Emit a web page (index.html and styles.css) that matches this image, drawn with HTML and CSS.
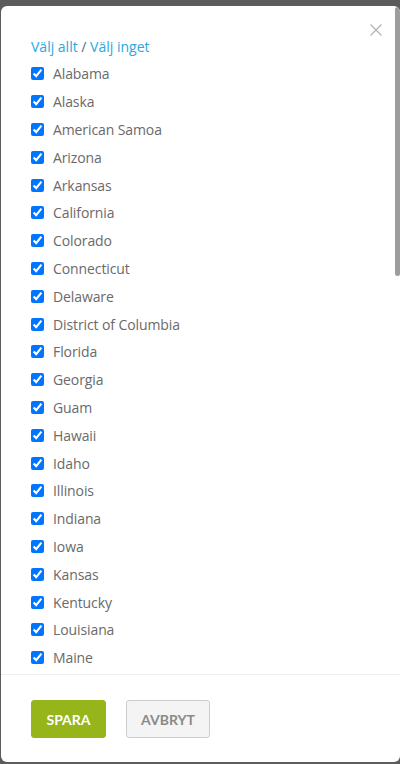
FILE: index.html
```html
<!DOCTYPE html>
<html lang="sv">
<head>
<meta charset="utf-8">
<link rel="stylesheet" href="styles.css">
</head>
<body>
<div class="modal">
  <button class="close" aria-label="Stäng">
    <svg width="12" height="12" viewBox="0 0 12 12"><path d="M0.5 0.5 L11.5 11.5 M11.5 0.5 L0.5 11.5" stroke="#b0b0b0" stroke-width="1.1" fill="none"/></svg>
  </button>
  <div class="scrollthumb"></div>
  <div class="body">
    <div class="links"><a href="#">Välj allt</a> <span class="sep">/</span> <a href="#">Välj inget</a></div>
    <ul class="list">
      <li><label><input type="checkbox" checked><span>Alabama</span></label></li>
      <li><label><input type="checkbox" checked><span>Alaska</span></label></li>
      <li><label><input type="checkbox" checked><span>American Samoa</span></label></li>
      <li><label><input type="checkbox" checked><span>Arizona</span></label></li>
      <li><label><input type="checkbox" checked><span>Arkansas</span></label></li>
      <li><label><input type="checkbox" checked><span>California</span></label></li>
      <li><label><input type="checkbox" checked><span>Colorado</span></label></li>
      <li><label><input type="checkbox" checked><span>Connecticut</span></label></li>
      <li><label><input type="checkbox" checked><span>Delaware</span></label></li>
      <li><label><input type="checkbox" checked><span>District of Columbia</span></label></li>
      <li><label><input type="checkbox" checked><span>Florida</span></label></li>
      <li><label><input type="checkbox" checked><span>Georgia</span></label></li>
      <li><label><input type="checkbox" checked><span>Guam</span></label></li>
      <li><label><input type="checkbox" checked><span>Hawaii</span></label></li>
      <li><label><input type="checkbox" checked><span>Idaho</span></label></li>
      <li><label><input type="checkbox" checked><span>Illinois</span></label></li>
      <li><label><input type="checkbox" checked><span>Indiana</span></label></li>
      <li><label><input type="checkbox" checked><span>Iowa</span></label></li>
      <li><label><input type="checkbox" checked><span>Kansas</span></label></li>
      <li><label><input type="checkbox" checked><span>Kentucky</span></label></li>
      <li><label><input type="checkbox" checked><span>Louisiana</span></label></li>
      <li><label><input type="checkbox" checked><span>Maine</span></label></li>
    </ul>
  </div>
  <div class="footer">
    <button class="btn btn-save">SPARA</button>
    <button class="btn btn-cancel">AVBRYT</button>
  </div>
</div>
</body>
</html>
```
FILE: styles.css
```css
html, body {
  margin: 0;
  padding: 0;
  height: 100%;
}
body {
  background: #5c5c5c;
  font-family: "Open Sans", "Noto Sans", sans-serif;
  overflow: hidden;
}
.modal {
  position: relative;
  margin: 6px 0 0 1px;
  width: 399px;
  height: 756px;
  background: #fff;
  border-radius: 6px;
  overflow: hidden;
  display: flex;
  flex-direction: column;
}
.close {
  position: absolute;
  top: 17px;
  right: 17px;
  width: 14px;
  height: 14px;
  padding: 1px;
  border: 0;
  background: none;
  cursor: pointer;
  line-height: 0;
}
.scrollthumb {
  position: absolute;
  top: 1px;
  right: 0;
  width: 5px;
  height: 269px;
  background: #9d9d9d;
  border-radius: 3px;
}
.body {
  flex: 1;
  overflow: hidden;
  padding: 31px 0 0 29px;
}
.links {
  font-size: 14px;
  line-height: 20px;
  height: 20px;
  margin: 0 0 3px 1px;
}
.links a {
  color: #2aa8e0;
  text-decoration: none;
}
.links .sep {
  color: #4f7189;
}
.list {
  list-style: none;
  margin: 0;
  padding: 0;
}
.list li {
  height: 27.8px;
  display: flex;
  align-items: center;
}
.list label {
  display: flex;
  align-items: center;
  gap: 9px;
  font-size: 14px;
  letter-spacing: -0.1px;
  color: #6a6a6a;
}
.list input {
  margin: 0 0 0 1px;
  width: 13px;
  height: 13px;
}
.footer {
  flex: none;
  height: 88px;
  border-top: 1px solid #efefef;
  display: flex;
  align-items: flex-start;
  gap: 20px;
  padding: 25px 0 0 30px;
  box-sizing: border-box;
}
.btn {
  font-family: "Lato", "Open Sans", sans-serif;
  font-weight: 700;
  font-size: 14px;
  height: 38px;
  border-radius: 3px;
  cursor: pointer;
}
.btn-save {
  width: 75px;
  background: #95b51b;
  border: 1px solid #95b51b;
  color: #fff;
}
.btn-cancel {
  width: 84px;
  background: #f4f4f4;
  border: 1px solid #cdcdcd;
  color: #8a8a8a;
}
```
